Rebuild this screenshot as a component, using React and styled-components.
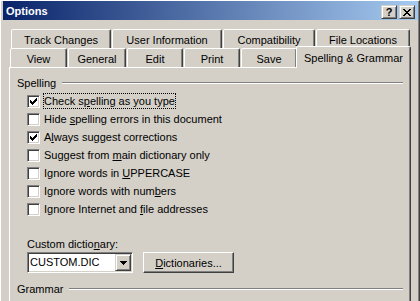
import React from "react";
import styled, { createGlobalStyle } from "styled-components";

const GlobalStyle = createGlobalStyle`
  html, body {
    margin: 0;
    padding: 0;
    background: #d4d0c8;
  }
  body {
    font-family: "Liberation Sans", Arial, sans-serif;
    font-size: 11px;
    color: #000;
  }
`;

const Window = styled.div`
  box-sizing: border-box;
  width: 420px;
  height: 301px;
  overflow: hidden;
  display: flex;
  flex-direction: column;
  background: #d4d0c8;
  border-top: 1px solid #ffffff;
  border-left: 1px solid #ffffff;
  border-right: 1px solid #404040;
  box-shadow: inset -1px 0 #808080;
  padding: 0 1px 0 2px;
`;

const TitleBar = styled.div`
  height: 19px;
  flex: none;
  display: flex;
  align-items: flex-start;
  padding: 0 3px 0 3px;
  background: linear-gradient(to right, #0a246a, #a6caf0);
`;

const Title = styled.div`
  flex: 1;
  color: #fff;
  font-weight: bold;
  font-size: 11px;
  line-height: 17px;
  padding-top: 2px;
`;

const CaptionButton = styled.div`
  box-sizing: border-box;
  width: 16px;
  height: 14px;
  margin-top: 4px;
  margin-left: ${(p) => (p.$first ? 0 : 2)}px;
  display: flex;
  align-items: center;
  justify-content: center;
  background: #d4d0c8;
  border: 1px solid;
  border-color: #d4d0c8 #404040 #404040 #d4d0c8;
  box-shadow: inset 1px 1px #fff, inset -1px -1px #808080;
  font-weight: bold;
  font-size: 11px;
  line-height: 12px;
`;

const Body = styled.div`
  flex: 1;
  display: flex;
  padding: 9px 0 0 6px;
  min-height: 0;
`;

const TabControl = styled.div`
  width: 402px;
  display: flex;
  flex-direction: column;
`;

const TabRow = styled.div`
  flex: none;
  display: flex;
  gap: 1px;
  height: 19px;
  padding-left: ${(p) => p.$indent}px;
`;

const Tab = styled.div`
  box-sizing: border-box;
  flex: none;
  width: ${(p) => (p.$selected ? p.$w + 4 : p.$w)}px;
  height: ${(p) => (p.$selected ? 22 : 19)}px;
  margin: ${(p) => (p.$selected ? "-2px -2px 0 -2px" : "0")};
  padding-top: ${(p) => (p.$selected ? 3 : 2)}px;
  position: relative;
  z-index: ${(p) => (p.$selected ? 2 : 0)};
  background: #d4d0c8;
  border: 1px solid;
  border-bottom: none;
  border-color: #fff #404040 transparent #fff;
  border-radius: 2px 2px 0 0;
  box-shadow: inset -1px 0 #808080;
  text-align: center;
  line-height: 16px;
  white-space: nowrap;
`;

const Panel = styled.div`
  flex: 1;
  display: flex;
  flex-direction: column;
  border-top: 1px solid #fff;
  border-left: 1px solid #fff;
  border-right: 1px solid #404040;
  box-shadow: inset -1px 0 #808080;
  padding: 8px 7px 0 7px;
`;

const GroupHeader = styled.div`
  display: flex;
  align-items: center;
  gap: 6px;
  height: 14px;
  margin-top: ${(p) => p.$top || 0}px;
`;

const GroupLabel = styled.span`
  line-height: 14px;
`;

const GroupLine = styled.div`
  flex: 1;
  height: 0;
  border-top: 1px solid #808080;
  border-bottom: 1px solid #fff;
`;

const CheckList = styled.div`
  display: flex;
  flex-direction: column;
  margin-top: 2px;
`;

const CheckRow = styled.div`
  height: 18px;
  display: flex;
  align-items: center;
  padding-left: 10px;
`;

const Box = styled.div`
  box-sizing: border-box;
  width: 13px;
  height: 13px;
  flex: none;
  display: flex;
  align-items: center;
  justify-content: center;
  background: #fff;
  border: 1px solid;
  border-color: #808080 #fff #fff #808080;
  box-shadow: inset 1px 1px #404040, inset -1px -1px #d4d0c8;
`;

const CheckLabel = styled.span`
  margin-left: 3px;
  border: 1px dotted ${(p) => (p.$focused ? "#000" : "transparent")};
  line-height: 14px;
  white-space: nowrap;
`;

const Key = styled.span`
  text-decoration: underline;
  text-underline-offset: 1px;
`;

const FieldLabel = styled.div`
  margin-top: 19px;
  padding-left: 10px;
  line-height: 14px;
`;

const FieldRow = styled.div`
  margin-top: 1px;
  display: flex;
  gap: 10px;
  padding-left: 10px;
`;

const Combo = styled.div`
  box-sizing: border-box;
  width: 106px;
  height: 21px;
  display: flex;
  align-items: center;
  background: #fff;
  border: 1px solid;
  border-color: #808080 #fff #fff #808080;
  box-shadow: inset 1px 1px #404040, inset -1px -1px #d4d0c8;
  padding: 0 1px 0 1px;
`;

const ComboText = styled.span`
  flex: 1;
  padding-left: 1px;
  line-height: 17px;
`;

const ComboButton = styled.div`
  box-sizing: border-box;
  width: 16px;
  height: 17px;
  display: flex;
  align-items: center;
  justify-content: center;
  background: #d4d0c8;
  border: 1px solid;
  border-color: #d4d0c8 #404040 #404040 #d4d0c8;
  box-shadow: inset 1px 1px #fff, inset -1px -1px #808080;
`;

const PushButton = styled.div`
  box-sizing: border-box;
  width: 91px;
  height: 21px;
  display: flex;
  align-items: center;
  justify-content: center;
  background: #d4d0c8;
  border: 1px solid;
  border-color: #fff #404040 #404040 #fff;
  box-shadow: inset -1px -1px #808080;
  line-height: 14px;
`;

const Pixels = ({ w, h, rects }) => (
  <svg width={w} height={h} viewBox={`0 0 ${w} ${h}`} shapeRendering="crispEdges">
    {rects.map(([x, y, rw, rh], i) => (
      <rect key={i} x={x} y={y} width={rw} height={rh} fill="#000" />
    ))}
  </svg>
);

const CloseGlyph = () => (
  <Pixels
    w={8}
    h={7}
    rects={[
      [0, 0, 2, 1], [6, 0, 2, 1],
      [1, 1, 2, 1], [5, 1, 2, 1],
      [2, 2, 4, 1],
      [3, 3, 2, 1],
      [2, 4, 4, 1],
      [1, 5, 2, 1], [5, 5, 2, 1],
      [0, 6, 2, 1], [6, 6, 2, 1],
    ]}
  />
);

const CheckGlyph = () => (
  <Pixels
    w={7}
    h={7}
    rects={[
      [0, 2, 1, 3], [1, 3, 1, 3], [2, 4, 1, 3], [3, 3, 1, 3],
      [4, 2, 1, 3], [5, 1, 1, 3], [6, 0, 1, 3],
    ]}
  />
);

const ArrowGlyph = () => (
  <Pixels w={7} h={4} rects={[[0, 0, 7, 1], [1, 1, 5, 1], [2, 2, 3, 1], [3, 3, 1, 1]]} />
);

const backTabs = [
  ["Track Changes", 100],
  ["User Information", 110],
  ["Compatibility", 92],
  ["File Locations", 94],
];

const frontTabs = [
  ["View", 57],
  ["General", 58],
  ["Edit", 56],
  ["Print", 56],
  ["Save", 56],
  ["Spelling & Grammar", 111, true],
];

const spellingOptions = [
  { pre: "Check s", key: "p", post: "elling as you type", checked: true, focused: true },
  { pre: "Hide ", key: "s", post: "pelling errors in this document" },
  { pre: "A", key: "l", post: "ways suggest corrections", checked: true },
  { pre: "Suggest from ", key: "m", post: "ain dictionary only" },
  { pre: "Ignore words in ", key: "U", post: "PPERCASE" },
  { pre: "Ignore words with num", key: "b", post: "ers" },
  { pre: "Ignore Internet and ", key: "f", post: "ile addresses" },
];

const App = () => {
  return (
    <>
      <GlobalStyle />
      <Window>
        <TitleBar>
          <Title>Options</Title>
          <CaptionButton $first>?</CaptionButton>
          <CaptionButton>
            <CloseGlyph />
          </CaptionButton>
        </TitleBar>
        <Body>
          <TabControl>
            <TabRow $indent={2}>
              {backTabs.map(([label, w]) => (
                <Tab key={label} $w={w}>
                  {label}
                </Tab>
              ))}
            </TabRow>
            <TabRow $indent={1}>
              {frontTabs.map(([label, w, selected]) => (
                <Tab key={label} $w={w} $selected={selected}>
                  {label}
                </Tab>
              ))}
            </TabRow>
            <Panel>
              <GroupHeader>
                <GroupLabel>Spelling</GroupLabel>
                <GroupLine />
              </GroupHeader>
              <CheckList>
                {spellingOptions.map((o) => (
                  <CheckRow key={o.pre + o.key}>
                    <Box>{o.checked && <CheckGlyph />}</Box>
                    <CheckLabel $focused={o.focused}>
                      {o.pre}
                      <Key>{o.key}</Key>
                      {o.post}
                    </CheckLabel>
                  </CheckRow>
                ))}
              </CheckList>
              <FieldLabel>
                Custom dictio<Key>n</Key>ary:
              </FieldLabel>
              <FieldRow>
                <Combo>
                  <ComboText>CUSTOM.DIC</ComboText>
                  <ComboButton>
                    <ArrowGlyph />
                  </ComboButton>
                </Combo>
                <PushButton>
                  <span>
                    <Key>D</Key>ictionaries...
                  </span>
                </PushButton>
              </FieldRow>
              <GroupHeader $top={9}>
                <GroupLabel>Grammar</GroupLabel>
                <GroupLine />
              </GroupHeader>
            </Panel>
          </TabControl>
        </Body>
      </Window>
    </>
  );
};

export default App;
